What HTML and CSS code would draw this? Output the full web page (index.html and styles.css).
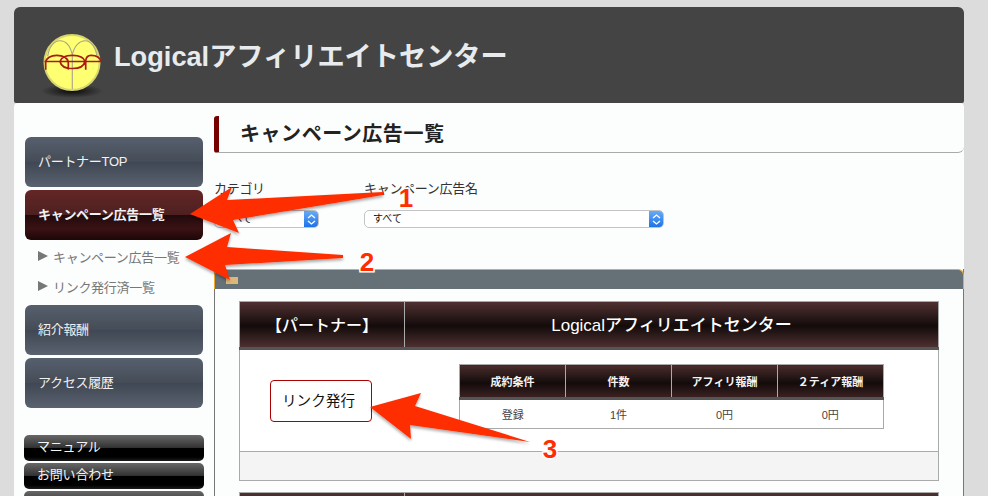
FILE: index.html
```html
<!DOCTYPE html>
<html lang="ja">
<head>
<meta charset="utf-8">
<title>Logicalアフィリエイトセンター</title>
<link rel="stylesheet" href="styles.css">
</head>
<body>
<div class="page">
  <header class="site-header">
    <svg class="logo" width="66" height="68" viewBox="0 0 66 68">
      <defs>
        <radialGradient id="shadow"><stop offset="0" stop-color="#000" stop-opacity=".85"/><stop offset="1" stop-color="#000" stop-opacity="0"/></radialGradient>
      </defs>
      <ellipse cx="31" cy="58" rx="31" ry="7" fill="url(#shadow)"/>
      <circle cx="31" cy="29.5" r="27.5" fill="#ffff72" stroke="#d8d56e" stroke-width="2"/>
      <path d="M31.3 21.7C29 12 24 7.7 19 7.7C13 7.7 8 14 6.7 23.3M31.3 21.7C33.500 12 39 7.700 44 7.700C50 7.700 54.500 14 56 23.300M31.300 20V56" fill="none" stroke="#a8a488" stroke-width="1.1"/>
      <path d="M4.700 36.700V29C5 25 10 22.300 15.700 22.300C22 22.300 27.300 25 27.300 30V36.700M3.500 28.500H60M19 28.500C20 24.500 25 22.300 31.300 22.300C38 22.300 43 24.500 44 28.500C43 33.500 38 35.500 31.300 35.500C25 35.500 20 33.500 19 28.500M44.700 36.700V28C45 24 47 22.300 50 22.300C55 22.300 59 24 60 28.500" fill="none" stroke="#a81c14" stroke-width="1.7"/>
    </svg>
    <h1 class="site-title">Logicalアフィリエイトセンター</h1>
  </header>
  <div class="main">
    <nav class="sidebar">
      <a class="nav-btn">パートナーTOP</a>
      <a class="nav-btn active">キャンペーン広告一覧</a>
      <ul class="subnav">
        <li>キャンペーン広告一覧</li>
        <li>リンク発行済一覧</li>
      </ul>
      <a class="nav-btn">紹介報酬</a>
      <a class="nav-btn">アクセス履歴</a>
      <div class="small-nav">
        <a class="small-btn">マニュアル</a>
        <a class="small-btn">お問い合わせ</a>
        <a class="small-btn"></a>
      </div>
    </nav>
    <section class="content">
      <h2 class="page-title">キャンペーン広告一覧</h2>
      <form class="filters">
        <div class="field field-cat">
          <label class="field-label">カテゴリ</label>
          <div class="select">
            <span class="select-text">すべて</span>
            <span class="stepper"><svg width="9" height="13" viewBox="0 0 9 13"><path d="M1 5L4.500 2L8 5M1 8L4.500 11L8 8" fill="none" stroke="#fff" stroke-width="1.300"/></svg></span>
          </div>
        </div>
        <div class="field field-name">
          <label class="field-label">キャンペーン広告名</label>
          <div class="select">
            <span class="select-text">すべて</span>
            <span class="stepper"><svg width="9" height="13" viewBox="0 0 9 13"><path d="M1 5L4.500 2L8 5M1 8L4.500 11L8 8" fill="none" stroke="#fff" stroke-width="1.300"/></svg></span>
          </div>
        </div>
      </form>
      <div class="panel">
        <div class="panel-head"><span class="panel-icon"></span></div>
        <div class="panel-body">
          <table class="offer">
            <thead>
              <tr><th class="offer-side">【パートナー】</th><th>Logicalアフィリエイトセンター</th></tr>
            </thead>
            <tbody>
              <tr>
                <td colspan="2" class="offer-body">
                  <div class="offer-row">
                    <a class="link-btn">リンク発行</a>
                    <table class="terms">
                      <thead><tr><th>成約条件</th><th>件数</th><th>アフィリ報酬</th><th>２ティア報酬</th></tr></thead>
                      <tbody><tr><td>登録</td><td>1件</td><td>0円</td><td>0円</td></tr></tbody>
                    </table>
                  </div>
                </td>
              </tr>
              <tr><td colspan="2" class="offer-foot"></td></tr>
            </tbody>
          </table>
          <table class="offer offer-next">
            <thead>
              <tr><th class="offer-side"></th><th></th></tr>
            </thead>
          </table>
        </div>
      </div>
    </section>
  </div>
</div>
<svg class="annotations" width="988" height="496" viewBox="0 0 988 496">
  <defs>
    <filter id="ds" x="-10%" y="-20%" width="120%" height="150%"><feDropShadow dx="0" dy="2" stdDeviation="1.500" flood-color="#000" flood-opacity=".35"/></filter>
  </defs>
  <g fill="#ff2d00" filter="url(#ds)">
    <path d="M190 214L232 187L227 200L383 192L383 195L233 220L239 233Z"/>
    <path d="M185 257L231 233L227 247L343 255L343 258L225 265L230 280Z"/>
    <path d="M370 407L421 393L415 406L530 442L410 425L411 439Z"/>
  </g>
  <g class="num">
    <text x="406" y="207">1</text>
    <text x="367" y="271">2</text>
    <text x="550" y="458">3</text>
  </g>
</svg>
</body>
</html>
```
FILE: styles.css
```css
* { box-sizing: border-box; }
html, body { margin: 0; height: 496px; overflow: hidden; }
body {
  background: #dcdcdc;
  font-family: "Liberation Sans", "Noto Sans CJK JP", sans-serif;
  color: #333;
  position: relative;
}
.page { width: 950px; margin: 7px 0 0 14px; }

.site-header {
  height: 96px;
  background: #444;
  border-radius: 6px 6px 2px 2px;
  display: flex;
  align-items: flex-start;
  padding: 26px 0 0 27px;
}
.logo { flex: none; margin-right: 8px; }
.site-title {
  margin: 8px 0 0 -1px;
  font-size: 27.2px;
  line-height: 32px;
  font-weight: bold;
  color: #e8ebee;
  white-space: nowrap;
}

.main {
  display: flex;
  background: #fcfdfd;
  border-radius: 4px 4px 0 0;
  height: 500px;
}

.sidebar {
  width: 189px;
  flex: none;
  padding: 34px 0 0 11px;
  display: flex;
  flex-direction: column;
  align-items: flex-start;
}
.nav-btn {
  width: 178px;
  height: 50px;
  flex: none;
  margin-bottom: 3px;
  padding: 0 0 4px 13px;
  display: flex;
  align-items: center;
  border-radius: 6px;
  font-size: 13px;
  letter-spacing: -.3px;
  color: #f0f2f4;
  background: linear-gradient(#56606c, #454c58 50%, #404754 50%, #59626e);
}
.nav-btn.active {
  font-weight: bold;
  margin-bottom: 0;
  background: linear-gradient(#642626, #4d2020 50%, #210a0c 50%, #3a1214 78%, #1c0607);
}
.subnav {
  list-style: none;
  margin: 0 0 4px;
  padding: 0 0 0 13px;
  height: 61px;
  width: 178px;
  flex: none;
  color: #777;
  font-size: 13px;
  letter-spacing: -.3px;
}
.subnav li {
  height: 30px;
  padding-top: 2px;
  display: flex;
  align-items: center;
}
.subnav li::before {
  content: "";
  border-left: 10px solid #777;
  border-top: 5px solid transparent;
  border-bottom: 5px solid transparent;
  margin-right: 5px;
}
.small-nav {
  margin: 24px 0 0 -1px;
  display: flex;
  flex-direction: column;
  gap: 2px;
}
.small-btn {
  width: 180px;
  height: 26px;
  padding-left: 13px;
  border-radius: 5px;
  font-size: 13px;
  line-height: 23px;
  letter-spacing: -.2px;
  color: #f4f4f4;
  background: linear-gradient(#686868, #333 48%, #000 50%, #000 85%, #1c1c1c);
}

.content { width: 750px; margin-left: 11px; flex: none; padding-top: 13px; }
.page-title {
  margin: 0;
  height: 37px;
  padding: 0 0 3px 21px;
  display: flex;
  align-items: center;
  border-left: 5px solid #700;
  border-bottom: 1px solid #aaa;
  border-radius: 3px 0 6px 3px;
  font-size: 20px;
  letter-spacing: .55px;
  color: #222;
}
.filters { display: flex; padding-top: 26px; height: 116px; }
.field { flex: none; }
.field-cat { width: 150px; }
.field-cat .select { width: 105px; }
.field-name .select { width: 300px; }
.field-label { display: block; height: 31px; line-height: 19px; font-size: 13px; letter-spacing: -.3px; color: #333; }
.select {
  height: 18px;
  display: flex;
  justify-content: space-between;
  background: #fff;
  border: 1px solid #c4c4c4;
  border-radius: 5px;
  overflow: hidden;
  font-size: 10px;
  color: #111;
}
.select-text { padding-left: 8px; line-height: 16px; }
.stepper {
  width: 15px;
  margin: -1px -1px -1px 0;
  display: flex;
  align-items: center;
  justify-content: center;
  background: linear-gradient(#6aaef8, #1a6fe8);
}

.panel { border-left: 1px solid #777; border-right: 1px solid #777; height: 300px; }
.panel-head {
  height: 20px;
  margin: 0 -1px;
  background: #667177;
  border: 1px solid #f0a830;
  border-bottom: 0;
  border-radius: 6px 6px 0 0;
  position: relative;
}
.panel-icon {
  position: absolute;
  left: 11px;
  top: 7px;
  width: 12px;
  height: 7px;
  background: #dcb878;
}
.panel-body { padding: 12px 24px 0; }

.offer {
  width: 700px;
  border-collapse: collapse;
  table-layout: fixed;
  margin-bottom: 11px;
}
.offer > thead th {
  height: 47px;
  padding: 0 0 2px;
  font-size: 17px;
  font-weight: 500;
  color: #fff;
  background: linear-gradient(#4f3030, #130b0b 52%, #4f3030);
  border: 1px solid #aaa;
  border-bottom: 3px solid #555;
}
.offer > thead .offer-side { width: 165px; font-size: 16px; }
.offer-body {
  height: 103px;
  padding: 0;
  background: #fff;
  border-left: 1px solid #aaa;
  border-right: 1px solid #aaa;
  vertical-align: top;
}
.offer-row { display: flex; align-items: flex-start; padding: 14px 0 0 30px; }
.link-btn {
  width: 102px;
  height: 42px;
  margin: 16px 87px 0 0;
  display: flex;
  align-items: center;
  justify-content: center;
  border: 1px solid #a00;
  border-radius: 4px;
  font-size: 14.6px;
  color: #111;
  flex: none;
  padding: 0 5px 4px 0;
}
.offer-foot {
  height: 29px;
  padding: 0;
  background: #f4f4f4;
  border: 1px solid #aaa;
}
.terms {
  width: 425px;
  border-collapse: collapse;
  table-layout: fixed;
}
.terms th {
  height: 34px;
  padding: 0;
  font-size: 11px;
  font-weight: bold;
  color: #f4f4f4;
  background: linear-gradient(#4a2c2c, #130b0b 55%, #3c2222);
  border: 1px solid #aaa;
  border-bottom: 3px solid #555;
}
.terms td {
  height: 30px;
  padding: 0;
  text-align: center;
  font-size: 11px;
  color: #444;
  border-bottom: 1px solid #aaa;
}
.terms td:first-child { border-left: 1px solid #aaa; }
.terms td:last-child { border-right: 1px solid #aaa; }

.annotations { position: absolute; left: 0; top: 0; pointer-events: none; }
.num text {
  font-family: "Liberation Sans", sans-serif;
  font-weight: bold;
  font-size: 26px;
  text-anchor: middle;
  fill: #ff2d00;
  stroke: #fff;
  stroke-width: 3px;
  paint-order: stroke;
}
```
